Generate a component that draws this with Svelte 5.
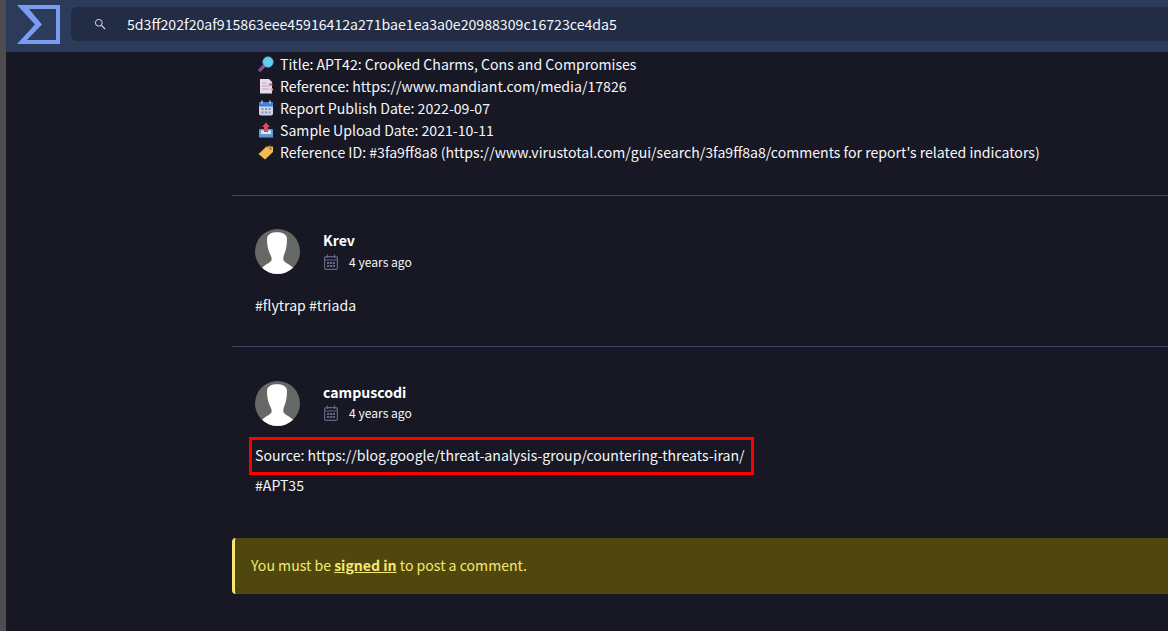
<script lang="ts">
	const reportLines = [
		{ icon: 'search', text: 'Title: APT42: Crooked Charms, Cons and Compromises' },
		{ icon: 'doc', text: 'Reference: https://www.mandiant.com/media/17826' },
		{ icon: 'calendar', text: 'Report Publish Date: 2022-09-07' },
		{ icon: 'upload', text: 'Sample Upload Date: 2021-10-11' },
		{ icon: 'tag', text: "Reference ID: #3fa9ff8a8 (https://www.virustotal.com/gui/search/3fa9ff8a8/comments for report's related indicators)" }
	];
</script>

{#snippet avatar()}
	<svg class="avatar" viewBox="0 0 45 45" aria-hidden="true">
		<circle cx="22.500" cy="22.500" r="22.500" fill="#666866" />
		<path d="M12 10C12 5 17 3.300 22 3.300S32 5 32 10C32 16 31 21 29 26C28 29 28 31 29 32C31 34.500 35 35.500 38 38.800A22.500 22.500 0 0 1 7 38.800C10 35.500 14 34.500 16 32C17 31 17 29 15.500 26C13 21 12 16 12 10Z" fill="#fff" />
	</svg>
{/snippet}

{#snippet calendar()}
	<svg class="cal" viewBox="0 0 14 16" aria-hidden="true">
		<g fill="none" stroke="#5f6785" stroke-width="1.200">
			<rect x="0.600" y="2.600" width="12.800" height="12.800" rx="1.500" />
			<path d="M0.500 6h13M3.500 0.500v3.500M10.500 0.500v3.500" />
		</g>
		<path d="M3 8h2.200v2H3zM5.900 8h2.200v2H5.900zM8.800 8h2.200v2H8.800zM3 11h2.200v2H3zM5.900 11h2.200v2H5.900zM8.800 11h2.200v2H8.800z" fill="#5f6785" />
	</svg>
{/snippet}

<div class="page">
	<header class="topbar">
		<svg class="logo" viewBox="0 0 43 39" aria-hidden="true">
			<path d="M0 0H43V39H0L18 19.500Z M12 4L25 19.500L10 35H39V4Z" fill="#7a9cf0" fill-rule="evenodd" />
		</svg>
		<div class="search">
			<svg class="search-icon" viewBox="0 0 12 12" aria-hidden="true">
				<circle cx="4.800" cy="4.800" r="3.400" fill="none" stroke="#d8dae2" stroke-width="1" />
				<path d="M7.400 7.400L11 11" stroke="#d8dae2" stroke-width="1.200" />
			</svg>
			<span class="hash">5d3ff202f20af915863eee45916412a271bae1ea3a0e20988309c16723ce4da5</span>
		</div>
	</header>

	<main class="content">
		<section class="report">
			{#each reportLines as line}
				<div class="report-line">
					<svg class="emoji" viewBox="0 0 16 16" aria-hidden="true">
						{#if line.icon === 'search'}
							<path d="M6 10L2 14" stroke="#8a4a9c" stroke-width="3.200" stroke-linecap="round" />
							<circle cx="10" cy="6" r="5.200" fill="#63cdf0" stroke="#4aa8d0" stroke-width="0.800" />
						{:else if line.icon === 'doc'}
							<path d="M2 1h9l3 3v11.500H2z" fill="#e6dcec" />
							<path d="M4 5h5M4 8h7M4 11h7" stroke="#b9a6c6" stroke-width="1" />
							<rect x="11" y="5.500" width="3.500" height="2" fill="#e0527a" />
							<rect x="12.500" y="10.500" width="2.500" height="2" fill="#e8b54a" />
						{:else if line.icon === 'calendar'}
							<rect x="1" y="2" width="14" height="13.500" rx="2" fill="#cdd6e6" />
							<path d="M1 6.500V4a2 2 0 0 1 2-2h10a2 2 0 0 1 2 2v2.500z" fill="#3f7fd6" />
							<path d="M4 0.500v3M12 0.500v3" stroke="#dfe5ee" stroke-width="1.200" />
							<path d="M3.500 8h2v2h-2zM7 8h2v2H7zM10.500 8h2v2h-2zM3.500 11.500h2v2h-2zM7 11.500h2v2H7zM10.500 11.500h2v2h-2z" fill="#8b93ac" />
						{:else if line.icon === 'upload'}
							<path d="M1 8a1 1 0 0 1 1-1h12a1 1 0 0 1 1 1v7.500H1z" fill="#5d9bd6" />
							<path d="M3 8.500h10v3.500H3z" fill="#dde6f0" />
							<path d="M8 0.500L12 5H10V10H6V5H4z" fill="#d94a5c" />
						{:else}
							<path d="M0.500 10L8.500 2.500H15V8L7 15.500z" fill="#f2bb4e" />
							<path d="M9 4L12.500 1" stroke="#a87e38" stroke-width="0.800" fill="none" />
							<circle cx="12.500" cy="4.800" r="1.200" fill="#9a7434" />
						{/if}
					</svg>
					<span>{line.text}</span>
				</div>
			{/each}
		</section>

		<article class="comment first">
			<div class="meta">
				{@render avatar()}
				<div class="who">
					<div class="name">Krev</div>
					<div class="when">{@render calendar()}<span>4 years ago</span></div>
				</div>
			</div>
			<p class="body">#flytrap #triada</p>
		</article>

		<article class="comment second">
			<div class="meta">
				{@render avatar()}
				<div class="who">
					<div class="name">campuscodi</div>
					<div class="when">{@render calendar()}<span>4 years ago</span></div>
				</div>
			</div>
			<p class="body source">
				<span class="highlight"></span>Source: https://blog.google/threat-analysis-group/countering-threats-iran/
			</p>
			<p class="body tag">#APT35</p>
		</article>

		<div class="notice">You must be <a href="#signin">signed in</a> to post a comment.</div>
	</main>
</div>

<style>
	:global(body) {
		background: #171824;
		overflow: hidden;
	}

	.page {
		height: 631px;
		border-left: 6px solid #4d4d4f;
		font-family: "Noto Sans CJK SC", "Noto Sans", sans-serif;
		font-size: 14.1px;
		color: #f6f7fa;
		overflow: hidden;
	}

	.topbar {
		display: flex;
		align-items: center;
		box-sizing: border-box;
		height: 52px;
		background: #2d3b5b;
		padding: 0 0 4px 11px;
	}

	.logo {
		width: 43px;
		height: 39px;
		flex-shrink: 0;
	}

	.search {
		display: flex;
		align-items: center;
		flex: 1;
		height: 34px;
		margin-left: 11px;
		padding-left: 23px;
		background: #222c45;
		border-radius: 6px 0 0 6px;
	}

	.search-icon {
		width: 12px;
		height: 12px;
		margin-right: 21px;
		flex-shrink: 0;
	}

	.hash {
		color: #f6f7fa;
		font-size: 14.13px;
	}

	.content {
		margin-left: 226px;
	}

	.report {
		box-sizing: border-box;
		padding: 1px 0 0 26px;
		height: 144px;
		border-bottom: 1px solid #3d4766;
	}

	.report-line {
		display: flex;
		align-items: center;
		gap: 6px;
		height: 22px;
		white-space: nowrap;
	}

	.emoji {
		width: 16px;
		height: 16px;
		flex-shrink: 0;
	}

	.comment {
		box-sizing: border-box;
		padding: 33px 0 0 23px;
	}

	.first {
		height: 151px;
		border-bottom: 1px solid #3d4766;
	}

	.second {
		padding-top: 34px;
		height: 191px;
	}

	.meta {
		display: flex;
		align-items: flex-start;
		gap: 23px;
	}

	.avatar {
		width: 45px;
		height: 45px;
		flex-shrink: 0;
	}

	.name {
		font-weight: 700;
		line-height: 22px;
		color: #fff;
	}

	.when {
		display: flex;
		align-items: center;
		gap: 11px;
		font-size: 12.1px;
		line-height: 22px;
	}

	.second .when {
		margin-top: -1px;
	}

	.cal {
		width: 14px;
		height: 16px;
		margin-left: 1px;
	}

	.body {
		margin: 0;
		line-height: 22px;
	}

	.first .body {
		margin-top: 20px;
	}

	.source {
		position: relative;
		margin-top: 18px;
	}

	.highlight {
		position: absolute;
		left: -6px;
		top: -7px;
		width: 499px;
		height: 32px;
		border: 3px solid #f00;
		pointer-events: none;
	}

	.tag {
		margin-top: 8px;
	}

	.notice {
		display: flex;
		align-items: center;
		box-sizing: border-box;
		white-space: pre;
		height: 56px;
		padding: 0 0 2px 16px;
		border-left: 3px solid #f6e873;
		border-radius: 4px 0 0 4px;
		background: #4f470d;
		color: #f6e873;
	}

	.notice a {
		color: #f6e873;
		font-weight: 700;
		text-decoration: underline;
	}
</style>
